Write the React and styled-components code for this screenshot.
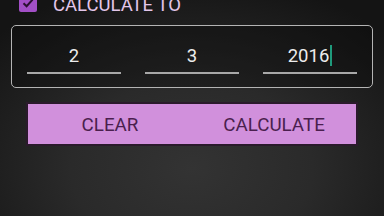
import React from "react";
import styled, { createGlobalStyle } from "styled-components";

const Global = createGlobalStyle`
  html, body { margin: 0; padding: 0; width: 384px; height: 216px; overflow: hidden; }
  body {
    background: radial-gradient(ellipse 70% 90% at 50% 78%, #333333 0%, #2a2a2a 45%, #141414 100%);
    font-family: Roboto, "Liberation Sans", sans-serif;
  }
`;

const Page = styled.div`
  width: 384px;
  height: 216px;
  display: flex;
  flex-direction: column;
`;

const Header = styled.div`
  display: flex;
  align-items: center;
  gap: 16px;
  margin-top: -6px;
  padding-left: 19px;
  height: 18px;
`;

const Check = styled.div`
  width: 18px;
  height: 18px;
  border-radius: 2px;
  background: #a24fc6;
  display: flex;
  align-items: center;
  justify-content: center;
`;

const HeaderLabel = styled.span`
  color: #e3c6ea;
  font-size: 18.5px;
  line-height: 18px;
  padding-top: 3px;
`;

const DateBox = styled.div`
  margin: 13px 11px 0 11px;
  height: 61px;
  border: 1px solid #b4b4b4;
  border-radius: 5px;
  background: rgba(10, 10, 10, 0.35);
  display: grid;
  grid-template-columns: repeat(3, 1fr);
  column-gap: 24px;
  padding: 0 15px;
  align-items: start;
`;

const Field = styled.div`
  margin-top: 19px;
  height: 27px;
  border-bottom: 2px solid #a8a8a8;
  display: flex;
  justify-content: center;
  align-items: flex-start;
  color: #ececec;
  font-size: 18.5px;
  line-height: 22px;
`;

const Caret = styled.span`
  display: inline-block;
  width: 2px;
  height: 21px;
  background: #1f9a7c;
  margin-left: 1px;
`;

const ButtonBar = styled.div`
  margin: 14px 26px 0 26px;
  height: 40px;
  border: 2px solid #2b1a2c;
  background: #d190dc;
  display: grid;
  grid-template-columns: 1fr 1fr;
`;

const Btn = styled.div`
  display: flex;
  align-items: center;
  justify-content: center;
  color: #4a1f4e;
  font-size: 18.8px;
  padding-top: 2px;
`;

export default function App() {
  return (
    <>
      <Global />
      <Page>
        <Header>
          <Check>
            <svg width="14" height="14" viewBox="0 0 14 14">
              <path d="M2.5 7.2 L5.6 10.2 L11.6 3.6" fill="none" stroke="#2a1030" strokeWidth="2" />
            </svg>
          </Check>
          <HeaderLabel>CALCULATE TO</HeaderLabel>
        </Header>
        <DateBox>
          <Field>2</Field>
          <Field>3</Field>
          <Field>
            2016<Caret />
          </Field>
        </DateBox>
        <ButtonBar>
          <Btn>CLEAR</Btn>
          <Btn>CALCULATE</Btn>
        </ButtonBar>
      </Page>
    </>
  );
}
